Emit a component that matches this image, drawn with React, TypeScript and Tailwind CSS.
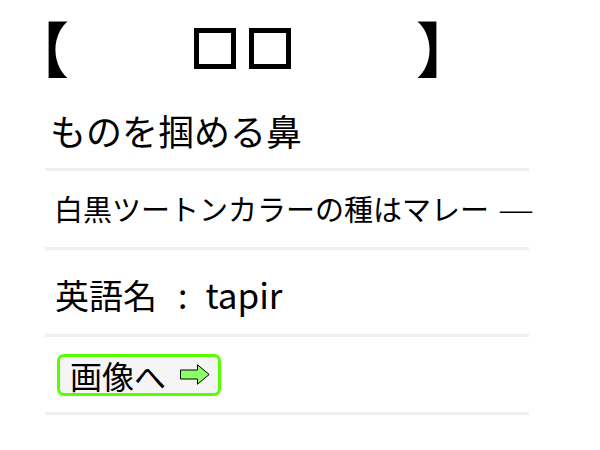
import React from 'react';

const jp = { fontFamily: '"Noto Sans CJK JP", "Noto Sans", sans-serif' };

const Tofu = () => (
  <span className="inline-block w-[42px] h-[41px] border-[5px] border-black box-border" />
);

const Arrow = () => (
  <svg width="30" height="21" viewBox="0 0 30 21" className="ml-[14px]">
    <path d="M0.5 6 H17.5 V0.8 L29.2 10.5 L17.5 20.2 V15 H0.5 Z" fill="#8cff66" stroke="#000" strokeWidth="1" />
  </svg>
);

export default function App() {
  return (
    <div className="w-[600px] h-[450px] bg-white text-black overflow-hidden font-normal" style={jp}>
      <div className="h-[95px] flex items-start pt-[2px] pl-[9px]">
        <div className="flex items-center text-[60px] leading-normal font-bold">
          <span>【</span>
          <span className="flex gap-[13px] ml-[125px] mt-[2px]">
            <Tofu />
            <Tofu />
          </span>
          <span className="ml-[125px]">】</span>
        </div>
      </div>
      <div className="ml-[45px] w-[484px]">
        <div className="h-[76px] flex items-center pl-[5px] border-b-[3px] border-[#f0f0f0] text-[36px] pb-[4px]">
          ものを掴める鼻
        </div>
        <div className="h-[79px] flex items-center pl-[9px] border-b-[3px] border-[#f0f0f0] text-[29px] whitespace-nowrap">
          <span>白黒ツートンカラーの種はマレー</span>
          <span className="ml-[11px] text-[32px]" style={{ fontFamily: '"Liberation Serif", serif' }}>—</span>
        </div>
        <div className="h-[87px] flex items-center pl-[10px] border-b-[3px] border-[#f0f0f0] text-[34px] pt-[4px]">
          <span>英語名</span>
          <span className="ml-[21px]">:</span>
          <span className="ml-[18px] text-[35px]">tapir</span>
        </div>
        <div className="h-[78px] flex items-center pl-[12px] border-b-[3px] border-[#f0f0f0]">
          <button className="flex items-center h-[42px] pl-[10px] pr-[8px] border-[3px] border-[#55ff00] rounded-[7px] bg-[#f5f5f5] text-[32px] leading-none" style={jp}>
            <span>画像へ</span>
            <Arrow />
          </button>
        </div>
      </div>
    </div>
  );
}
